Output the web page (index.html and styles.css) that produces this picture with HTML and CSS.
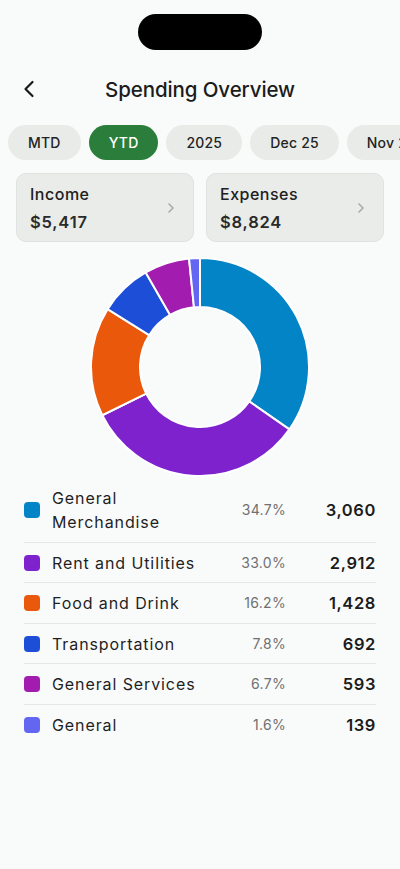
FILE: index.html
```html
<!DOCTYPE html>
<html lang="en">
<head>
<meta charset="utf-8">
<meta name="viewport" content="width=device-width, initial-scale=1">
<title>Spending Overview</title>
<link rel="stylesheet" href="styles.css">
</head>
<body>
<div class="screen">
  <div class="status"><div class="notch"></div></div>
  <header class="header">
    <button class="back" aria-label="Back">
      <svg width="12" height="18" viewBox="0 0 12 18"><path d="M9.5 2 L2.5 9 L9.5 16" fill="none" stroke="#1a1a1a" stroke-width="2.2" stroke-linecap="round" stroke-linejoin="round"/></svg>
    </button>
    <h1 class="title">Spending Overview</h1>
  </header>

  <nav class="chips">
    <span class="chip">MTD</span>
    <span class="chip chip-active">YTD</span>
    <span class="chip">2025</span>
    <span class="chip">Dec 25</span>
    <span class="chip">Nov 25</span>
  </nav>

  <section class="cards">
    <div class="card">
      <div class="card-text">
        <div class="card-label">Income</div>
        <div class="card-value">$5,417</div>
      </div>
      <svg class="chev" width="8" height="12" viewBox="0 0 8 12"><path d="M2 2 L6 6 L2 10" fill="none" stroke="#a7aba7" stroke-width="1.6" stroke-linecap="round" stroke-linejoin="round"/></svg>
    </div>
    <div class="card">
      <div class="card-text">
        <div class="card-label">Expenses</div>
        <div class="card-value">$8,824</div>
      </div>
      <svg class="chev" width="8" height="12" viewBox="0 0 8 12"><path d="M2 2 L6 6 L2 10" fill="none" stroke="#a7aba7" stroke-width="1.6" stroke-linecap="round" stroke-linejoin="round"/></svg>
    </div>
  </section>

  <div class="chart">
    <svg width="222" height="222" viewBox="-1 -1 222 222">
      <g stroke="#ffffff" stroke-width="2" stroke-linejoin="round">
        <path fill="#0284c7" d="M110 1 A109 109 0 0 1 199.37 172.40 L159.19 144.35 A60 60 0 0 0 110 50 Z"/>
        <path fill="#7e22ce" d="M199.37 172.40 A109 109 0 0 1 12.27 158.27 L56.20 136.57 A60 60 0 0 0 159.19 144.35 Z"/>
        <path fill="#ea580c" d="M12.27 158.27 A109 109 0 0 1 17.60 52.18 L59.14 78.17 A60 60 0 0 0 56.20 136.57 Z"/>
        <path fill="#1d4ed8" d="M17.60 52.18 A109 109 0 0 1 55.70 15.49 L80.11 57.97 A60 60 0 0 0 59.14 78.17 Z"/>
        <path fill="#a21caf" d="M55.70 15.49 A109 109 0 0 1 99.06 1.55 L103.98 50.30 A60 60 0 0 0 80.11 57.97 Z"/>
        <path fill="#6366f1" d="M99.06 1.55 A109 109 0 0 1 110 1 L110 50 A60 60 0 0 0 103.98 50.30 Z"/>
      </g>
    </svg>
  </div>

  <ul class="list">
    <li class="row"><span class="swatch sw-gm"></span><span class="name">General Merchandise</span><span class="pct">34.7%</span><span class="amt">3,060</span></li>
    <li class="row"><span class="swatch sw-ru"></span><span class="name">Rent and Utilities</span><span class="pct">33.0%</span><span class="amt">2,912</span></li>
    <li class="row"><span class="swatch sw-fd"></span><span class="name">Food and Drink</span><span class="pct">16.2%</span><span class="amt">1,428</span></li>
    <li class="row"><span class="swatch sw-tr"></span><span class="name">Transportation</span><span class="pct">7.8%</span><span class="amt">692</span></li>
    <li class="row"><span class="swatch sw-gs"></span><span class="name">General Services</span><span class="pct">6.7%</span><span class="amt">593</span></li>
    <li class="row"><span class="swatch sw-g"></span><span class="name">General</span><span class="pct">1.6%</span><span class="amt">139</span></li>
  </ul>
</div>
</body>
</html>
```

FILE: styles.css
```css
* { box-sizing: border-box; }

html, body {
  margin: 0;
  padding: 0;
  background: #f9fbfb;
}

body {
  font-family: Inter, "Noto Sans", "DejaVu Sans", sans-serif;
  color: #1c1c1c;
  width: 400px;
  height: 869px;
  overflow: hidden;
}

.screen {
  display: flex;
  flex-direction: column;
}

.status {
  height: 64px;
  display: flex;
  justify-content: center;
  padding-top: 14px;
}

.notch {
  width: 124px;
  height: 36px;
  border-radius: 18px;
  background: #000;
}

.header {
  height: 50px;
  display: flex;
  align-items: center;
  justify-content: center;
  position: relative;
}

.back {
  position: absolute;
  left: 20px;
  top: 16px;
  width: 18px;
  height: 18px;
  border: 0;
  padding: 0;
  background: none;
  display: flex;
  align-items: center;
  justify-content: center;
}

.title {
  margin: 0;
  font-size: 20.5px;
  font-weight: 500;
  letter-spacing: -0.1px;
  color: #1c1c1c;
}

.chips {
  margin-top: 11px;
  display: flex;
  gap: 8px;
  padding-left: 8px;
  white-space: nowrap;
  overflow: hidden;
}

.chip {
  flex: none;
  height: 35px;
  padding: 0 20px;
  border-radius: 18px;
  background: #e8ebe7;
  display: flex;
  align-items: center;
  font-size: 14px;
  font-weight: 500;
  letter-spacing: 0.2px;
  color: #232323;
}

.chip-active {
  background: #2a7d3a;
  color: #ffffff;
}

.cards {
  margin-top: 13px;
  padding: 0 16px;
  display: grid;
  grid-template-columns: 1fr 1fr;
  gap: 12px;
}

.card {
  height: 69px;
  border-radius: 10px;
  background: #e9ece8;
  border: 1px solid #dfe2de;
  padding: 9px 18px 8px 13px;
  display: flex;
  align-items: center;
  justify-content: space-between;
}

.card-text {
  display: flex;
  flex-direction: column;
  gap: 5px;
  align-self: flex-start;
}

.card-label {
  font-size: 16px;
  line-height: 22px;
  font-weight: 500;
  letter-spacing: 0.5px;
  color: #202020;
}

.card-value {
  font-size: 16.5px;
  line-height: 24px;
  font-weight: 600;
  letter-spacing: 0.8px;
  color: #2a2a2a;
}

.chev { flex: none; }

.chart {
  margin-top: 14px;
  display: flex;
  justify-content: center;
}

.list {
  list-style: none;
  margin: 0;
  padding: 0 24px;
}

.row {
  display: grid;
  grid-template-columns: 28px 1fr 70px 90px;
  align-items: center;
  padding: 8px 0 7.5px;
  border-bottom: 1px solid #e4e7e4;
}

.row:last-child { border-bottom: 0; }

.swatch {
  width: 16px;
  height: 16px;
  border-radius: 4px;
}

.sw-gm { background: #0284c7; }
.sw-ru { background: #7e22ce; }
.sw-fd { background: #ea580c; }
.sw-tr { background: #1d4ed8; }
.sw-gs { background: #a21caf; }
.sw-g  { background: #6366f1; }

.name {
  font-size: 16px;
  line-height: 24px;
  letter-spacing: 0.9px;
  color: #1f1f1f;
  padding-right: 4px;
}

.pct {
  font-size: 14px;
  line-height: 24px;
  color: #707070;
  text-align: right;
  letter-spacing: 0.3px;
}

.amt {
  font-size: 16.5px;
  line-height: 24px;
  font-weight: 600;
  text-align: right;
  letter-spacing: 0.6px;
  color: #1c1c1c;
}
```
